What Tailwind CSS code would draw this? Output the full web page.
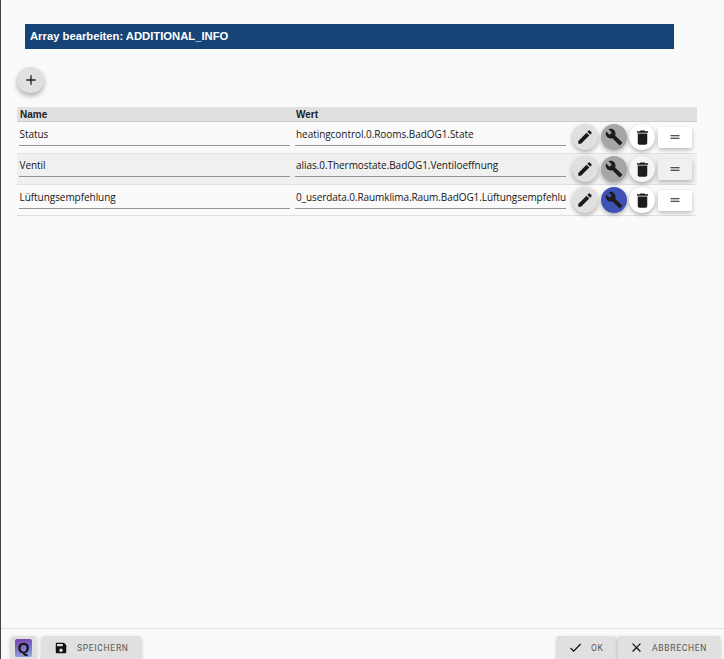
<!DOCTYPE html>
<html lang="de">
<head>
  <meta charset="UTF-8" />
  <title>Array bearbeiten</title>
  <script src="https://cdn.jsdelivr.net/npm/@tailwindcss/browser@4"></script>
</head>
<body class="bg-[#fafafa] h-[659px] overflow-hidden font-['Liberation_Sans',sans-serif] text-[#1f1f1f]">
  <div class="h-[659px] border-l border-[#444] flex flex-col">
    <main class="flex-1 pt-6 pl-4">
      <!-- Title -->
      <div class="ml-2 w-[649px] h-[25px] bg-[#164477] text-white text-[11.25px] font-bold flex items-center pl-[5px]">Array bearbeiten: ADDITIONAL_INFO</div>

      <!-- Add -->
      <button class="mt-[18px] w-[27px] h-[26px] rounded-full bg-[#e0e0e0] flex items-center justify-center shadow-[0_3px_5px_rgba(0,0,0,0.3)]">
        <svg class="w-[16px] h-[16px]" viewBox="0 0 24 24" fill="#222"><path d="M19 13h-6v6h-2v-6H5v-2h6V5h2v6h6v2z"/></svg>
      </button>

      <!-- Table -->
      <div class="mt-[14px] w-[680px]">
        <div class="h-[15px] bg-[#e0e0e0] border-b border-[#ccc] flex text-[10px] font-bold leading-[15px] text-[#222]">
          <div class="w-[278px] pl-[3px]">Name</div>
          <div class="pl-[1px]">Wert</div>
        </div>

        <div class="h-[32px] border-b border-[#e0e0e0] flex relative font-['Open_Sans',sans-serif] text-[10px] text-[#161616] tracking-[-0.05px]">
          <div class="ml-[2px] w-[271px] h-[24px] border-b border-[#949494] flex items-center pl-[0.5px] pt-[1px]">Status</div>
          <div class="ml-[5px] w-[271px] h-[24px] border-b border-[#949494] flex items-center pl-[1px] pt-[1px] overflow-hidden whitespace-nowrap">heatingcontrol.0.Rooms.BadOG1.State</div>
          <div class="absolute left-[555px] top-[2px] flex items-center">
            <button class="w-[26px] h-[26px] rounded-full bg-[#e0e0e0] flex items-center justify-center shadow-[0_2px_4px_rgba(0,0,0,0.3)]">
              <svg class="w-[18px] h-[18px]" viewBox="0 0 24 24" fill="#1c1c1c"><path d="M3 17.25V21h3.75L17.81 9.94l-3.75-3.75L3 17.25zM20.71 7.04a1 1 0 0 0 0-1.41l-2.34-2.34a1 1 0 0 0-1.41 0l-1.83 1.83 3.75 3.75 1.83-1.83z"/></svg>
            </button>
            <button class="ml-[3px] w-[26px] h-[26px] rounded-full bg-[#a6a6a6] flex items-center justify-center shadow-[0_2px_4px_rgba(0,0,0,0.3)]">
              <svg class="w-[18px] h-[18px]" viewBox="0 0 24 24" fill="#1c1c1c"><path d="M22.7 19l-9.1-9.1c.9-2.3.4-5-1.5-6.9-2-2-5-2.4-7.4-1.3L9 6 6 9 1.6 4.7C.4 7.1.9 10.1 2.9 12.1c1.9 1.9 4.6 2.4 6.9 1.5l9.1 9.1c.4.4 1 .4 1.4 0l2.3-2.3c.5-.4.5-1.1.1-1.4z"/></svg>
            </button>
            <button class="ml-[2px] w-[26px] h-[26px] rounded-full bg-white flex items-center justify-center shadow-[0_2px_4px_rgba(0,0,0,0.3)]">
              <svg class="w-[19px] h-[19px]" viewBox="0 0 24 24" fill="#1c1c1c"><path d="M6 19c0 1.1.9 2 2 2h8c1.1 0 2-.9 2-2V7H6v12zM19 4h-3.5l-1-1h-5l-1 1H5v2h14V4z"/></svg>
            </button>
            <button class="ml-[3px] w-[34px] h-[21px] rounded-[2px] bg-white flex items-center justify-center shadow-[0_2px_4px_rgba(0,0,0,0.25)]">
              <svg class="w-[12px] h-[12px]" viewBox="0 0 24 24" fill="#1c1c1c"><path d="M3 8.5h18v2H3zM3 13.5h18v2H3z"/></svg>
            </button>
          </div>
        </div>

        <div class="h-[31px] bg-[#f0f0f0] border-b border-[#e0e0e0] flex relative font-['Open_Sans',sans-serif] text-[10px] text-[#161616] tracking-[-0.05px]">
          <div class="ml-[2px] w-[271px] h-[23px] border-b border-[#949494] flex items-center pl-[0.5px] pt-[1px]">Ventil</div>
          <div class="ml-[5px] w-[271px] h-[23px] border-b border-[#949494] flex items-center pl-[1px] pt-[1px] overflow-hidden whitespace-nowrap">alias.0.Thermostate.BadOG1.Ventiloeffnung</div>
          <div class="absolute left-[555px] top-[2px] flex items-center">
            <button class="w-[26px] h-[26px] rounded-full bg-[#e0e0e0] flex items-center justify-center shadow-[0_2px_4px_rgba(0,0,0,0.3)]">
              <svg class="w-[18px] h-[18px]" viewBox="0 0 24 24" fill="#1c1c1c"><path d="M3 17.25V21h3.75L17.81 9.94l-3.75-3.75L3 17.25zM20.71 7.04a1 1 0 0 0 0-1.41l-2.34-2.34a1 1 0 0 0-1.41 0l-1.83 1.83 3.75 3.75 1.83-1.83z"/></svg>
            </button>
            <button class="ml-[3px] w-[26px] h-[26px] rounded-full bg-[#a6a6a6] flex items-center justify-center shadow-[0_2px_4px_rgba(0,0,0,0.3)]">
              <svg class="w-[18px] h-[18px]" viewBox="0 0 24 24" fill="#1c1c1c"><path d="M22.7 19l-9.1-9.1c.9-2.3.4-5-1.5-6.9-2-2-5-2.4-7.4-1.3L9 6 6 9 1.6 4.7C.4 7.1.9 10.1 2.9 12.1c1.9 1.9 4.6 2.4 6.9 1.5l9.1 9.1c.4.4 1 .4 1.4 0l2.3-2.3c.5-.4.5-1.1.1-1.4z"/></svg>
            </button>
            <button class="ml-[2px] w-[26px] h-[26px] rounded-full bg-[#f5f5f5] flex items-center justify-center shadow-[0_2px_4px_rgba(0,0,0,0.3)]">
              <svg class="w-[19px] h-[19px]" viewBox="0 0 24 24" fill="#1c1c1c"><path d="M6 19c0 1.1.9 2 2 2h8c1.1 0 2-.9 2-2V7H6v12zM19 4h-3.5l-1-1h-5l-1 1H5v2h14V4z"/></svg>
            </button>
            <button class="ml-[3px] w-[34px] h-[21px] rounded-[2px] bg-[#f0f0f0] flex items-center justify-center shadow-[0_2px_4px_rgba(0,0,0,0.25)]">
              <svg class="w-[12px] h-[12px]" viewBox="0 0 24 24" fill="#1c1c1c"><path d="M3 8.5h18v2H3zM3 13.5h18v2H3z"/></svg>
            </button>
          </div>
        </div>

        <div class="h-[31px] border-b border-[#e0e0e0] flex relative font-['Open_Sans',sans-serif] text-[10px] text-[#161616] tracking-[-0.05px]">
          <div class="ml-[2px] w-[271px] h-[24px] border-b border-[#949494] flex items-center pl-[0.5px] pt-[1px]">Lüftungsempfehlung</div>
          <div class="ml-[5px] w-[271px] h-[24px] border-b border-[#949494] flex items-center pl-[1px] pt-[1px] whitespace-nowrap tracking-[-0.08px]"><span class="block w-[272px] shrink-0 overflow-hidden">0_userdata.0.Raumklima.Raum.BadOG1.Lüftungsempfehlu</span></div>
          <div class="absolute left-[555px] top-[2px] flex items-center">
            <button class="w-[26px] h-[26px] rounded-full bg-[#e0e0e0] flex items-center justify-center shadow-[0_2px_4px_rgba(0,0,0,0.3)]">
              <svg class="w-[18px] h-[18px]" viewBox="0 0 24 24" fill="#1c1c1c"><path d="M3 17.25V21h3.75L17.81 9.94l-3.75-3.75L3 17.25zM20.71 7.04a1 1 0 0 0 0-1.41l-2.34-2.34a1 1 0 0 0-1.41 0l-1.83 1.83 3.75 3.75 1.83-1.83z"/></svg>
            </button>
            <button class="ml-[3px] w-[26px] h-[26px] rounded-full bg-[#3f51b5] flex items-center justify-center shadow-[0_2px_4px_rgba(0,0,0,0.3)]">
              <svg class="w-[18px] h-[18px]" viewBox="0 0 24 24" fill="#1c1c1c"><path d="M22.7 19l-9.1-9.1c.9-2.3.4-5-1.5-6.9-2-2-5-2.4-7.4-1.3L9 6 6 9 1.6 4.7C.4 7.1.9 10.1 2.9 12.1c1.9 1.9 4.6 2.4 6.9 1.5l9.1 9.1c.4.4 1 .4 1.4 0l2.3-2.3c.5-.4.5-1.1.1-1.4z"/></svg>
            </button>
            <button class="ml-[2px] w-[26px] h-[26px] rounded-full bg-white flex items-center justify-center shadow-[0_2px_4px_rgba(0,0,0,0.3)]">
              <svg class="w-[19px] h-[19px]" viewBox="0 0 24 24" fill="#1c1c1c"><path d="M6 19c0 1.1.9 2 2 2h8c1.1 0 2-.9 2-2V7H6v12zM19 4h-3.5l-1-1h-5l-1 1H5v2h14V4z"/></svg>
            </button>
            <button class="ml-[3px] w-[34px] h-[21px] rounded-[2px] bg-white flex items-center justify-center shadow-[0_2px_4px_rgba(0,0,0,0.25)]">
              <svg class="w-[12px] h-[12px]" viewBox="0 0 24 24" fill="#1c1c1c"><path d="M3 8.5h18v2H3zM3 13.5h18v2H3z"/></svg>
            </button>
          </div>
        </div>
      </div>
    </main>

    <!-- Footer -->
    <footer class="h-[31px] border-t border-[#e0e0e0] flex items-start pt-[7px] pl-[10px] pr-[4px] text-[8.5px] tracking-[0.7px] text-[#555] font-['Roboto',sans-serif]">
      <div class="w-[25px] h-[23px] bg-[#e0e0e0] rounded-t-[2px] flex items-center justify-center shadow-[0_2px_4px_rgba(0,0,0,0.25)]">
        <div class="w-[17px] h-[18px] rounded-[2px] bg-[linear-gradient(170deg,#7340b0,#8fa8e4)] flex items-center justify-center text-[15px] font-bold leading-none tracking-normal text-[#111] font-['Liberation_Sans',sans-serif]">Q</div>
      </div>
      <button class="ml-[6px] w-[99px] h-[23px] bg-[#e0e0e0] rounded-t-[2px] flex items-center pl-[12px] gap-[9px] shadow-[0_2px_4px_rgba(0,0,0,0.25)]">
        <svg class="w-[14px] h-[14px]" viewBox="0 0 24 24" fill="#111"><path d="M17 3H5a2 2 0 0 0-2 2v14a2 2 0 0 0 2 2h14a2 2 0 0 0 2-2V7l-4-4zm-5 16a3 3 0 1 1 0-6 3 3 0 0 1 0 6zm3-10H5V5h10v4z"/></svg>
        <span class="pt-[1px]">SPEICHERN</span>
      </button>
      <div class="flex-1"></div>
      <button class="w-[59px] h-[23px] bg-[#e0e0e0] rounded-t-[2px] flex items-center pl-[11px] gap-[8px] shadow-[0_2px_4px_rgba(0,0,0,0.25)]">
        <svg class="w-[15px] h-[15px]" viewBox="0 0 24 24" fill="#111"><path d="M9 16.2 4.8 12l-1.4 1.4L9 19 21 7l-1.4-1.4z"/></svg>
        <span class="pt-[1px]">OK</span>
      </button>
      <button class="ml-[2px] w-[102px] h-[23px] bg-[#e0e0e0] rounded-t-[2px] flex items-center pl-[11px] gap-[8px] shadow-[0_2px_4px_rgba(0,0,0,0.25)]">
        <svg class="w-[15px] h-[15px]" viewBox="0 0 24 24" fill="#111"><path d="M19 6.4 17.6 5 12 10.6 6.4 5 5 6.4 10.6 12 5 17.6 6.4 19 12 13.4 17.6 19 19 17.6 13.4 12z"/></svg>
        <span class="pt-[1px]">ABBRECHEN</span>
      </button>
    </footer>
  </div>
</body>
</html>
